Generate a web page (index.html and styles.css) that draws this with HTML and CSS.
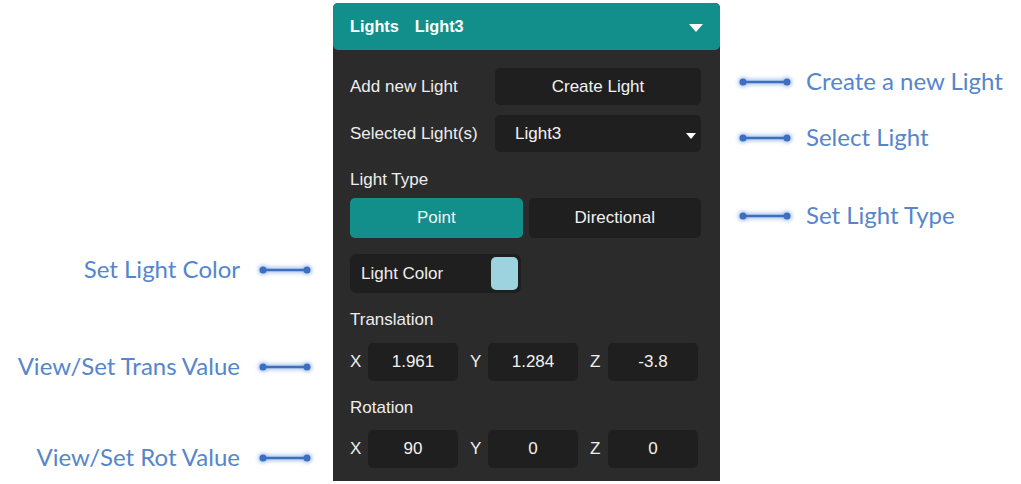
FILE: index.html
```html
<!DOCTYPE html>
<html>
<head>
<meta charset="utf-8">
<link rel="stylesheet" href="styles.css">
</head>
<body>
<div class="page">
  <div class="notes notes-left">
    <div class="note note-l1"><span class="note-text">Set Light Color</span><svg class="conn" viewBox="0 0 56 14" width="56" height="14"><line x1="6" y1="7" x2="50" y2="7"/><circle cx="6" cy="7" r="3.5"/><circle cx="50" cy="7" r="3.5"/></svg></div>
    <div class="note note-l2"><span class="note-text">View/Set Trans Value</span><svg class="conn" viewBox="0 0 56 14" width="56" height="14"><line x1="6" y1="7" x2="50" y2="7"/><circle cx="6" cy="7" r="3.5"/><circle cx="50" cy="7" r="3.5"/></svg></div>
    <div class="note note-l3"><span class="note-text">View/Set Rot Value</span><svg class="conn" viewBox="0 0 56 14" width="56" height="14"><line x1="6" y1="7" x2="50" y2="7"/><circle cx="6" cy="7" r="3.5"/><circle cx="50" cy="7" r="3.5"/></svg></div>
  </div>

  <div class="panel">
    <div class="panel-head">
      <span class="head-title">Lights</span><span class="head-sub">Light3</span>
      <svg class="head-caret" viewBox="0 0 14 8" width="14" height="8"><polygon points="0,0 14,0 7,8"/></svg>
    </div>
    <div class="panel-body">
      <div class="row row-first">
        <span class="lbl">Add new Light</span>
        <div class="field btn-create">Create Light</div>
      </div>
      <div class="row row-second">
        <span class="lbl">Selected Light(s)</span>
        <div class="field select">
          <span>Light3</span>
          <svg class="sel-caret" viewBox="0 0 10 6" width="10" height="6"><polygon points="0,0 10,0 5,6"/></svg>
        </div>
      </div>
      <div class="section-lbl sl-type">Light Type</div>
      <div class="seg">
        <div class="seg-btn active">Point</div>
        <div class="seg-btn">Directional</div>
      </div>
      <div class="color-box">
        <span>Light Color</span>
        <span class="swatch"></span>
      </div>
      <div class="section-lbl sl-trans">Translation</div>
      <div class="vec">
        <div class="vec-item"><span class="axis">X</span><div class="num">1.961</div></div>
        <div class="vec-item"><span class="axis">Y</span><div class="num">1.284</div></div>
        <div class="vec-item"><span class="axis">Z</span><div class="num">-3.8</div></div>
      </div>
      <div class="section-lbl sl-rot">Rotation</div>
      <div class="vec vec-rot">
        <div class="vec-item"><span class="axis">X</span><div class="num">90</div></div>
        <div class="vec-item"><span class="axis">Y</span><div class="num">0</div></div>
        <div class="vec-item"><span class="axis">Z</span><div class="num">0</div></div>
      </div>
    </div>
  </div>

  <div class="notes notes-right">
    <div class="note note-r1"><svg class="conn" viewBox="0 0 56 14" width="56" height="14"><line x1="6" y1="7" x2="50" y2="7"/><circle cx="6" cy="7" r="3.5"/><circle cx="50" cy="7" r="3.5"/></svg><span class="note-text">Create a new Light</span></div>
    <div class="note note-r2"><svg class="conn" viewBox="0 0 56 14" width="56" height="14"><line x1="6" y1="7" x2="50" y2="7"/><circle cx="6" cy="7" r="3.5"/><circle cx="50" cy="7" r="3.5"/></svg><span class="note-text">Select Light</span></div>
    <div class="note note-r3"><svg class="conn" viewBox="0 0 56 14" width="56" height="14"><line x1="6" y1="7" x2="50" y2="7"/><circle cx="6" cy="7" r="3.5"/><circle cx="50" cy="7" r="3.5"/></svg><span class="note-text">Set Light Type</span></div>
  </div>
</div>
</body>
</html>
```

FILE: styles.css
```css
* { box-sizing: border-box; }

html, body {
  margin: 0;
  padding: 0;
  background: #ffffff;
}

body {
  width: 1021px;
  height: 484px;
  overflow: hidden;
  font-family: "Liberation Sans", Arial, sans-serif;
}

.page {
  display: flex;
  align-items: flex-start;
  height: 484px;
}

/* ---------- annotations ---------- */
.notes {
  display: flex;
  flex-direction: column;
}

.notes-left {
  width: 333px;
  align-items: flex-end;
  padding-right: 20px;
  padding-top: 255px;
}

.notes-right {
  flex: 1;
  padding-left: 17px;
  padding-top: 67px;
}

.note {
  height: 30px;
  display: flex;
  align-items: center;
}

.note-l2 { margin-top: 67px; }
.note-l3 { margin-top: 61px; }
.note-r2 { margin-top: 26px; }
.note-r3 { margin-top: 48px; }

.note-text {
  font-family: "Lato", "Open Sans", sans-serif;
  font-size: 24px;
  color: #5586cc;
  white-space: nowrap;
  margin-top: -4px;
}

.notes-left .note-text { margin-right: 17px; }
.notes-right .note-text { margin-left: 13px; }

.conn {
  display: block;
  flex: none;
  overflow: visible;
  filter: drop-shadow(0 0 2px #8fb0e8) drop-shadow(0 0 2px #bcd0f3);
}
.conn line {
  stroke: #3d6fc0;
  stroke-width: 2.6;
}
.conn circle {
  fill: #3d6fc0;
}

/* ---------- panel ---------- */
.panel {
  width: 387px;
  height: 478px;
  margin-top: 3px;
  background: #2b2b2b;
  border-radius: 5px 5px 0 0;
  color: #eeeeee;
  font-size: 17px;
}

.panel-head {
  height: 47px;
  background: #138f8b;
  border-radius: 5px;
  display: flex;
  align-items: center;
  padding: 0 17px 0 17px;
  font-weight: bold;
  color: #ffffff;
  font-size: 16.3px;
}

.head-sub { margin-left: 16px; }

.head-caret {
  margin-left: auto;
  fill: #ffffff;
  margin-top: 3px;
}

.panel-body {
  padding: 0 19px 0 17px;
}

.row {
  display: flex;
  align-items: center;
  justify-content: space-between;
  height: 37px;
}
.row-first { margin-top: 18px; }
.row-second { margin-top: 10px; }

.lbl {
  color: #eeeeee;
}

.field {
  width: 206px;
  height: 37px;
  background: #1f1f1f;
  border-radius: 5px;
  display: flex;
  align-items: center;
  color: #f2f2f2;
}

.btn-create {
  justify-content: center;
}

.select {
  padding: 0 5px 0 20px;
  justify-content: space-between;
}
.sel-caret {
  fill: #ffffff;
  margin-top: 4px;
}

.section-lbl {
  height: 20px;
  line-height: 20px;
  color: #eeeeee;
}
.sl-type { margin-top: 18px; }
.sl-trans { margin-top: 17px; }
.sl-rot { margin-top: 17px; }

.seg {
  margin-top: 8px;
  display: flex;
  gap: 6px;
  height: 40px;
}
.seg-btn {
  flex: 1;
  background: #1f1f1f;
  border-radius: 5px;
  display: flex;
  align-items: center;
  justify-content: center;
  color: #f2f2f2;
}
.seg-btn.active {
  background: #138f8b;
}

.color-box {
  margin-top: 16px;
  width: 171px;
  height: 39px;
  background: #1f1f1f;
  border-radius: 6px;
  display: flex;
  align-items: center;
  justify-content: space-between;
  padding: 0 3px 0 11px;
}
.swatch {
  width: 27px;
  height: 33px;
  border-radius: 5px;
  background: #9dd3df;
}

.vec {
  margin-top: 13px;
  display: flex;
  gap: 12px;
  height: 38px;
}
.vec-rot { margin-top: 12px; }

.vec-item {
  width: 108px;
  display: flex;
  align-items: center;
}
.axis {
  width: 18px;
  color: #eeeeee;
}
.num {
  width: 90px;
  height: 38px;
  background: #1f1f1f;
  border-radius: 5px;
  display: flex;
  align-items: center;
  justify-content: center;
  color: #f2f2f2;
}
```
